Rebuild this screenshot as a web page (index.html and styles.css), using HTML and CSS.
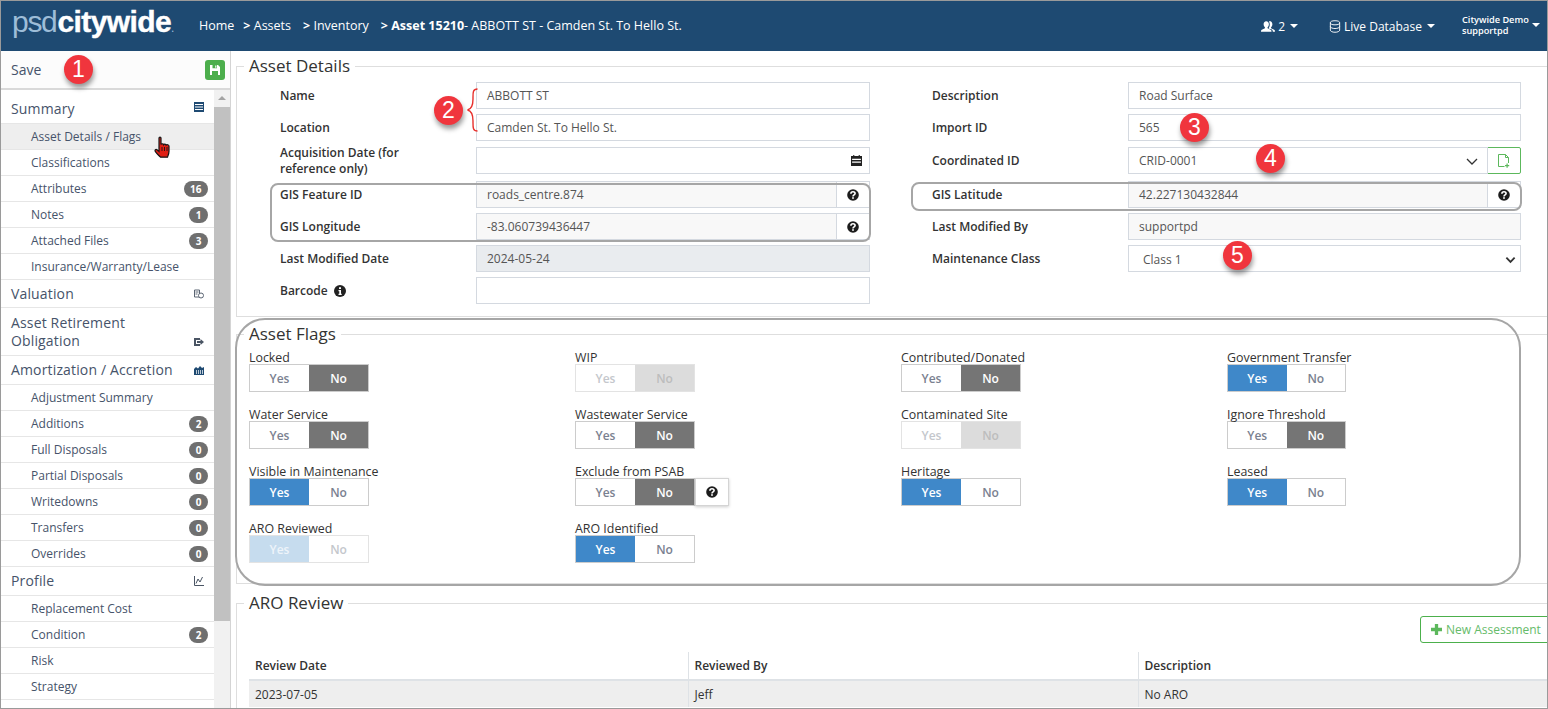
FILE: index.html
```html
<!DOCTYPE html>
<html lang="en">
<head>
<meta charset="utf-8">
<title>Asset Details</title>
<link rel="stylesheet" href="styles.css">
</head>
<body>
<div class="app">
  <header class="topbar">
    <div class="logo"><span class="logo-a">psd</span><span class="logo-b">citywide</span><span class="logo-r">.</span></div>
    <nav class="crumbs">
      <span>Home</span><span><b>&gt;</b> Assets</span><span class="crumb-far"><b>&gt;</b> Inventory</span><span class="crumb-far"><b>&gt; Asset 15210</b>- ABBOTT ST - Camden St. To Hello St.</span>
    </nav>
    <div class="top-right">
      <div class="top-item">
        <svg class="ti" viewBox="0 0 16 14"><path fill="#fff" d="M6 1c2 0 3 1.500 3 3.500 0 1.500-.7 2.800-1.500 3.400v1l3.500 1.700c.8.4 1 1 1 2.400H0c0-1.400.2-2 1-2.400l3.500-1.700v-1C3.700 7.300 3 6 3 4.500 3 2.500 4 1 6 1z"/><path fill="#fff" d="M10 1c2 0 3 1.500 3 3.500 0 1.500-.7 2.800-1.500 3.400v1l3.500 1.700c.6.300 1 .8 1 2.400h-2.500c0-1.500-.5-2.300-1.500-2.800L9 9.500V8.500c.8-.8 1-2.500 1-4 0-1.300-.4-2.600-1-3.300.3-.1.600-.2 1-.2z"/></svg>
        <span>2</span><i class="caret"></i>
      </div>
      <div class="top-item db">
        <svg class="ti ti-db" viewBox="0 0 12 14"><g fill="none" stroke="#fff" stroke-width="1"><ellipse cx="6" cy="3" rx="5" ry="2.200"/><path d="M1 3v8c0 1.200 2.200 2.200 5 2.200s5-1 5-2.200V3M1 7c0 1.200 2.200 2.200 5 2.200S11 8.200 11 7"/></g></svg>
        <span>Live Database</span><i class="caret"></i>
      </div>
      <div class="top-user">
        <div class="user-text"><div>Citywide Demo</div><div>supportpd</div></div><i class="caret"></i>
      </div>
    </div>
  </header>

  <div class="body">
    <aside class="side">
      <div class="save-row">
        <span>Save</span>
        <span class="save-btn"><svg viewBox="0 0 12 12" width="12" height="12"><path fill="#fff" d="M1 1h8l2 2v8H1z"/><path fill="#4cae4c" d="M3.500 1h4.500v3.200H3.500zM3 7h6v4H3z"/><path fill="#fff" d="M6.200 1.500h1.200v2.200H6.200z"/></svg></span>
      </div>
      <div class="side-scroll">
        <ul class="menu">
          <li class="head h33">Summary
            <svg class="mi" viewBox="0 0 10 10"><path fill="#1f4a72" d="M0 0h10v10H0z"/><path fill="#fff" d="M1 2h8v1H1zM1 4.500h8v1H1zM1 7h8v1H1z"/></svg></li>
          <li class="item active">Asset Details / Flags</li>
          <li class="item">Classifications</li>
          <li class="item">Attributes<span class="badge">16</span></li>
          <li class="item">Notes<span class="badge">1</span></li>
          <li class="item">Attached Files<span class="badge">3</span></li>
          <li class="item">Insurance/Warranty/Lease</li>
          <li class="head h28">Valuation
            <svg class="mi" viewBox="0 0 10 10"><path fill="none" stroke="#5a6472" d="M.5 1h5v7h-5zM1.500 3h3M1.500 5h2"/><circle cx="7" cy="6.500" r="2.500" fill="#fff" stroke="#5a6472"/></svg></li>
          <li class="head tall">Asset Retirement Obligation
            <svg class="mi mi-low" viewBox="0 0 10 10"><path fill="#4a5564" d="M0 1h6v2H2v4h4v2H0z"/><path fill="#4a5564" d="M3 4h3.500V2L10 5 6.500 8V6H3z"/></svg></li>
          <li class="head h29">Amortization / Accretion
            <svg class="mi" viewBox="0 0 10 10"><path fill="#1f4a72" d="M0 4l2-2 2 1.500L6 1l2 2 2-1v8H0z"/><path fill="#fff" d="M2 5h.7v4H2zM4 5h.7v4H4zM6 5h.7v4H6zM8 5h.7v4H8z"/></svg></li>
          <li class="item">Adjustment Summary</li>
          <li class="item">Additions<span class="badge">2</span></li>
          <li class="item">Full Disposals<span class="badge">0</span></li>
          <li class="item">Partial Disposals<span class="badge">0</span></li>
          <li class="item">Writedowns<span class="badge">0</span></li>
          <li class="item">Transfers<span class="badge">0</span></li>
          <li class="item">Overrides<span class="badge">0</span></li>
          <li class="head h29">Profile
            <svg class="mi" viewBox="0 0 10 10"><path fill="none" stroke="#4a5564" d="M.5 0v9.500H10M2 7.500L4 3l2 3 2.500-5"/></svg></li>
          <li class="item">Replacement Cost</li>
          <li class="item">Condition<span class="badge">2</span></li>
          <li class="item">Risk</li>
          <li class="item">Strategy</li>
        </ul>
        <div class="scrollbar">
          <div class="sb-up"></div>
          <div class="sb-thumb"></div>
        </div>
      </div>
    </aside>

    <main class="main">
      <fieldset class="panel details">
        <legend>Asset Details</legend>
        <div class="form-grid">
          <label>Name</label><div class="field">ABBOTT ST</div>
          <label>Description</label><div class="field">Road Surface</div>

          <label>Location</label><div class="field">Camden St. To Hello St.</div>
          <label>Import ID</label><div class="field">565</div>

          <label class="two"><span>Acquisition Date (for reference only)</span></label>
          <div class="field end"><svg class="cal" viewBox="0 0 10 10"><path fill="#222" d="M0 1h2V0h1v1h4V0h1v1h2v9H0z"/><path fill="#fff" d="M1 3.500h8v1H1zM1 6h8v1H1z"/></svg></div>
          <label>Coordinated ID</label>
          <div class="combo"><div class="field grow">CRID-0001<svg class="chev" viewBox="0 0 12 7"><path fill="none" stroke="#333" stroke-width="1.300" d="M1 1l5 5 5-5"/></svg></div>
            <div class="add-btn"><svg viewBox="0 0 12 14" width="12" height="14"><path fill="none" stroke="#5cb85c" d="M.5.500h7l3 3V9M10.500 3.500h-3v-3M.5.500v12h6"/><path fill="#5cb85c" d="M8.500 9.500h1.200v1.500h1.500v1.200H9.700v1.500H8.500v-1.500H7V11h1.500z"/></svg></div></div>

          <label>GIS Feature ID</label>
          <div class="group"><div class="field ro grow">roads_centre.874</div><div class="help-cell"><svg class="q"><use href="#qmark"/></svg></div></div>
          <label>GIS Latitude</label>
          <div class="group"><div class="field ro grow">42.227130432844</div><div class="help-cell"><svg class="q"><use href="#qmark"/></svg></div></div>

          <label>GIS Longitude</label>
          <div class="group"><div class="field ro grow">-83.060739436447</div><div class="help-cell"><svg class="q"><use href="#qmark"/></svg></div></div>
          <label>Last Modified By</label><div class="field ro">supportpd</div>

          <label>Last Modified Date</label><div class="field dis">2024-05-24</div>
          <label>Maintenance Class</label><div class="field sel">Class 1<svg class="chev2" viewBox="0 0 12 8"><path fill="none" stroke="#333" stroke-width="2" d="M1.500 1.500L6 6l4.500-4.500"/></svg></div>

          <label>Barcode <svg class="info" viewBox="0 0 12 12"><circle cx="6" cy="6" r="6" fill="#222"/><path fill="#fff" d="M5 2.300h2v1.700H5zM4.500 5h2.500v3.800h.7V10H4.500V8.800h.8V6.200h-.8z"/></svg></label><div class="field"></div>
        </div>
      </fieldset>

      <fieldset class="panel flags">
        <legend>Asset Flags</legend>
        <div class="flag-grid">
          <div class="flag"><div class="flag-label">Locked</div><div class="toggle"><span>Yes</span><span class="on-no">No</span></div></div>
          <div class="flag"><div class="flag-label">WIP</div><div class="toggle off"><span>Yes</span><span class="on-no">No</span></div></div>
          <div class="flag"><div class="flag-label">Contributed/Donated</div><div class="toggle"><span>Yes</span><span class="on-no">No</span></div></div>
          <div class="flag"><div class="flag-label">Government Transfer</div><div class="toggle"><span class="on-yes">Yes</span><span>No</span></div></div>

          <div class="flag"><div class="flag-label">Water Service</div><div class="toggle"><span>Yes</span><span class="on-no">No</span></div></div>
          <div class="flag"><div class="flag-label">Wastewater Service</div><div class="toggle"><span>Yes</span><span class="on-no">No</span></div></div>
          <div class="flag"><div class="flag-label">Contaminated Site</div><div class="toggle off"><span>Yes</span><span class="on-no">No</span></div></div>
          <div class="flag"><div class="flag-label">Ignore Threshold</div><div class="toggle"><span>Yes</span><span class="on-no">No</span></div></div>

          <div class="flag"><div class="flag-label">Visible in Maintenance</div><div class="toggle"><span class="on-yes">Yes</span><span>No</span></div></div>
          <div class="flag"><div class="flag-label">Exclude from PSAB</div><div class="toggle-row"><div class="toggle"><span>Yes</span><span class="on-no">No</span></div><div class="help-btn"><svg class="q"><use href="#qmark"/></svg></div></div></div>
          <div class="flag"><div class="flag-label">Heritage</div><div class="toggle"><span class="on-yes">Yes</span><span>No</span></div></div>
          <div class="flag"><div class="flag-label">Leased</div><div class="toggle"><span class="on-yes">Yes</span><span>No</span></div></div>

          <div class="flag"><div class="flag-label">ARO Reviewed</div><div class="toggle off"><span class="on-yes">Yes</span><span>No</span></div></div>
          <div class="flag"><div class="flag-label">ARO Identified</div><div class="toggle"><span class="on-yes">Yes</span><span>No</span></div></div>
        </div>
      </fieldset>

      <fieldset class="panel review">
        <legend>ARO Review</legend>
        <div class="actions"><div class="new-btn"><svg viewBox="0 0 10 10" width="11" height="11"><path fill="#5cb85c" d="M3.500 0h3v3.500H10v3H6.500V10h-3V6.500H0v-3h3.500z"/></svg>New Assessment</div></div>
        <table class="grid">
          <colgroup><col class="c1"><col class="c2"><col></colgroup>
          <thead><tr><th>Review Date</th><th>Reviewed By</th><th>Description</th></tr></thead>
          <tbody><tr><td>2023-07-05</td><td>Jeff</td><td>No ARO</td></tr></tbody>
        </table>
      </fieldset>
    </main>
  </div>

  <!-- Annotations drawn over the screenshot -->
  <div class="outline o1"></div>
  <div class="outline o2"></div>
  <div class="outline o3"></div>
  <svg class="brace" viewBox="0 0 12 44"><path fill="none" stroke="#e8302c" stroke-width="1.400" d="M11.500 1C6.500 1 7 5 7 11c0 6-1 10-5.500 11C6 23 7 27 7 33c0 6-.5 10 4.500 10"/></svg>
  <svg class="hand" viewBox="0 0 17 22"><path fill="#e01f14" stroke="#161616" stroke-width="1.200" d="M5 2c0-1.300 2-1.300 2 0v6.500c.4-1 2.200-1 2.600.2.500-.9 2.200-.8 2.500.3.600-.7 2.900-.4 2.900 1.200v5c0 2.500-1.100 4.700-1.500 6H6.500C5 19.500 1.300 16.600 1 14.700c-.1-1.300 1.200-1.600 2-1l2 1.700z"/><path fill="none" stroke="#161616" stroke-width=".9" d="M8 11v4M10.500 11v4M13 11v4"/></svg>
  <div class="pin p1">1</div>
  <div class="pin p2">2</div>
  <div class="pin p3">3</div>
  <div class="pin p4">4</div>
  <div class="pin p5">5</div>
</div>

<svg class="defs" width="0" height="0"><defs>
  <symbol id="qmark" viewBox="0 0 12 12"><circle cx="6" cy="6" r="5.800" fill="#1c1c1c"/><path fill="none" stroke="#fff" stroke-width="1.600" d="M3.900 4.700c0-1.400 1-2 2.100-2 1.200 0 2.100.7 2.100 1.800 0 1.500-2.100 1.400-2.100 3"/><path fill="#fff" d="M5.100 8.200h1.800v1.600H5.100z"/></symbol>
</defs></svg>
</body>
</html>
```
FILE: styles.css
```css
* { box-sizing: border-box; }
html, body { margin: 0; padding: 0; height: 100%; overflow: hidden; background: #fff; }
body { font-family: "Open Sans", "Liberation Sans", sans-serif; font-size: 12px; color: #333; }
.app { position: relative; width: 1548px; height: 709px; border: 1px solid #9a9a9a; display: flex; flex-direction: column; overflow: hidden; }
.defs { position: absolute; }

/* top bar */
.topbar { height: 50px; flex: none; background: #1e4a72; color: #fff; display: flex; align-items: center; padding: 0 0 0 11px; }
.logo { width: 187px; font-family: "Liberation Sans", Arial, sans-serif; font-size: 30px; line-height: 50px; flex: none; margin-top: -2px; white-space: nowrap; }
.logo-a { color: #9dbdd8; letter-spacing: -1.300px; }
.logo-b { color: #fff; font-weight: 700; letter-spacing: -.6px; margin-left: 1px; -webkit-text-stroke: .4px #fff; }
.logo-r { color: #9dbdd8; font-size: 12px; }
.crumbs { display: flex; gap: 9px; font-size: 12.500px; margin-top: -2px; }
.crumbs b { font-weight: 700; }
.crumb-far { margin-left: 3px; }
.top-right { margin-left: auto; display: flex; align-items: center; }
.top-item { display: flex; align-items: center; gap: 3px; font-size: 12px; }
.top-item.db { margin-left: 31px; }
.ti { width: 14px; height: 13px; }
.ti-db { width: 12px; height: 13px; }
.caret { display: inline-block; width: 0; height: 0; border: 4px solid transparent; border-top-color: #fff; border-bottom: 0; margin-left: 2px; }
.top-item .caret { margin-left: 5px; }
.top-item span + .caret { margin-left: 2px; }
.top-user { display: flex; align-items: flex-start; margin-left: 27px; width: 85px; }
.user-text { font-size: 9.200px; line-height: 11px; font-weight: 600; margin-top: -2px; }
.top-user .caret { margin-left: 3px; margin-top: 7px; }

/* layout */
.body { flex: 1; display: flex; min-height: 0; }
.side { width: 230px; flex: none; border-right: 1px solid #d4d4d4; display: flex; flex-direction: column; min-height: 0; color: #46536a; }
.save-row { height: 39px; flex: none; border-bottom: 2px solid #d9d9d9; display: flex; align-items: center; justify-content: space-between; padding: 0 5px 0 10px; font-size: 14px; background: #fcfcfc; }
.save-btn { width: 20px; height: 20px; background: #4cae4c; border-radius: 3px; display: flex; align-items: center; justify-content: center; }
.side-scroll { flex: 1; display: flex; min-height: 0; overflow: hidden; }
.menu { list-style: none; margin: 0; padding: 0; width: 213px; flex: none; }
.menu li { position: relative; border-bottom: 1px solid #e6e6e6; display: flex; align-items: center; }
.head { font-size: 14px; padding: 0 30px 0 10px; justify-content: space-between; line-height: 18px; letter-spacing: .15px; }
.h33 { height: 34px; padding-top: 4px; }
.h28 { height: 28px; }
.h29 { height: 29px; }
.tall { height: 48px; }
.item { height: 26px; padding: 0 6px 0 30px; font-size: 12px; justify-content: space-between; color: #46536a; }
.item.active { background: #eeeeee; }
.mi { position: absolute; right: 10px; top: 50%; margin-top: -5px; width: 10px; height: 10px; }
.mi-low { top: auto; bottom: 8px; margin: 0; }
.badge { background: #6f6f6f; color: #fff; border-radius: 8px; min-width: 19px; height: 16px; padding: 0 6.500px; font-size: 10px; font-weight: 700; line-height: 16px; text-align: center; }
.scrollbar { width: 17px; flex: none; background: #f1f1f1; }
.sb-up { height: 17px; position: relative; }
.sb-up::after { content: ""; position: absolute; left: 4px; top: 6px; border: 4px solid transparent; border-top: 0; border-bottom: 4px solid #a3a3a3; }
.sb-thumb { height: 514px; background: #c1c1c1; }

/* main */
.main { flex: 1; min-width: 0; padding: 4px 0 0 5px; overflow: hidden; }
.panel { margin: 0; padding: 0; border: 1px solid #dedede; border-right: 0; min-width: 0; }
.panel legend { margin-left: 7px; padding: 0 5px; font-size: 17px; font-weight: 500; line-height: 22px; color: #333; }
.details { height: 262px; }
.form-grid { display: grid; grid-template-columns: 196px 394px 258px 393px; grid-template-rows: 32px 33px 34px 32px 32px 32px 27px; padding: 5px 0 0 43px; align-items: start; }
.form-grid > :nth-child(4n+3) { margin-left: 62px; }
.form-grid label { height: 27px; font-weight: 600; font-size: 12px; color: #333; display: flex; align-items: center; gap: 6px; }
.form-grid label.two { line-height: 16px; padding-right: 20px; }
.field { height: 27px; border: 1px solid #d4d9e0; background: #fff; padding: 0 10px; display: flex; align-items: center; font-size: 12px; color: #555; position: relative; }
.field.ro { background: #f8f8f8; }
.field.dis { background: #e9ecef; }
.field.sel { padding-left: 14px; padding-top: 2px; }
.field.end { justify-content: flex-end; padding-right: 7px; }
.grow { flex: 1; min-width: 0; }
.group, .combo { display: flex; height: 27px; }
.help-cell { width: 33px; border: 1px solid #d4d9e0; border-left: 0; display: flex; align-items: center; justify-content: center; background: #fff; }
.q { width: 12px; height: 12px; display: block; }
.cal { width: 11px; height: 11px; }
.info { width: 12px; height: 12px; }
.chev { position: absolute; right: 9px; top: 10px; width: 12px; height: 7px; }
.chev2 { position: absolute; right: 4px; top: 10px; width: 11px; height: 8px; }
.add-btn { width: 34px; border: 1px solid #5cb85c; border-radius: 0 2px 2px 0; margin-left: -1px; display: flex; align-items: center; justify-content: center; background: #fff; }

.flags { height: 261px; margin-top: 6px; }
.flag-grid { display: grid; grid-template-columns: repeat(4, 326px); grid-auto-rows: 57px; padding: 5px 0 0 12px; }
.flag-label { font-size: 12.400px; height: 14px; line-height: 16px; color: #333; }
.toggle { display: flex; width: 120px; height: 28px; border: 1px solid #ccc; font-weight: 600; color: #7a8190; background: #fff; }
.flag:nth-child(4n) .toggle { width: 119px; }
.toggle span { flex: 1; display: flex; align-items: center; justify-content: center; }
.toggle .on-no { background: #757575; color: #fff; }
.toggle .on-yes { background: #3f88c9; color: #fff; }
.toggle.off { border-color: #e3e3e3; color: #c4c7cc; }
.toggle.off .on-no { background: #dcdcdc; color: #bdbdbd; }
.toggle.off .on-yes { background: #c6dcee; color: #eef4fa; }
.toggle-row { display: flex; }
.help-btn { width: 34px; height: 28px; border: 1px solid #d4d4d4; box-shadow: 0 1px 3px rgba(0,0,0,.2); display: flex; align-items: center; justify-content: center; background: #fff; }

.review { margin-top: 8px; height: 117px; }
.actions { display: flex; justify-content: flex-end; padding-top: 2px; height: 38px; margin-right: -2px; }
.new-btn { height: 27px; width: 129px; border: 1px solid #4cb04c; border-radius: 3px 0 0 3px; color: #66bb6a; display: flex; align-items: center; gap: 4px; padding-left: 10px; font-size: 12px; font-weight: 500; }
.grid { border-collapse: collapse; width: calc(100% - 12px); margin-left: 12px; table-layout: fixed; font-size: 12px; }
.c1 { width: 439px; }
.c2 { width: 450px; }
.grid th { height: 28px; text-align: left; font-weight: 600; padding: 0 6px; border-bottom: 2px solid #dee2e6; border-left: 1px solid #dee2e6; color: #333; }
.grid th:first-child, .grid td:first-child { border-left: 0; }
.grid td { height: 27px; padding: 0 6px; background: #eee; border-left: 1px solid #dee2e6; color: #333; }

/* annotations */
.outline { position: absolute; border: 2px solid #a6a6a6; }
.o1 { left: 269px; top: 182px; width: 601px; height: 59px; border-radius: 8px; }
.o2 { left: 910px; top: 181px; width: 611px; height: 29px; border-radius: 8px; }
.o3 { left: 234px; top: 317px; width: 1286px; height: 268px; border-radius: 30px; }
.brace { position: absolute; left: 465px; top: 87px; width: 12px; height: 44px; }
.hand { position: absolute; left: 153px; top: 135px; width: 17px; height: 22px; }
.pin { position: absolute; width: 29px; height: 29px; border-radius: 50%; background: #f0353d; color: #fff; font-family: "Liberation Sans", Arial, sans-serif; font-size: 23px; line-height: 29px; text-align: center; box-shadow: 1px 4px 5px rgba(0,0,0,.4); }
.p1 { left: 63px; top: 54px; }
.p2 { left: 433px; top: 95px; }
.p3 { left: 1179px; top: 112px; }
.p4 { left: 1255px; top: 143px; }
.p5 { left: 1222px; top: 240px; }
```
